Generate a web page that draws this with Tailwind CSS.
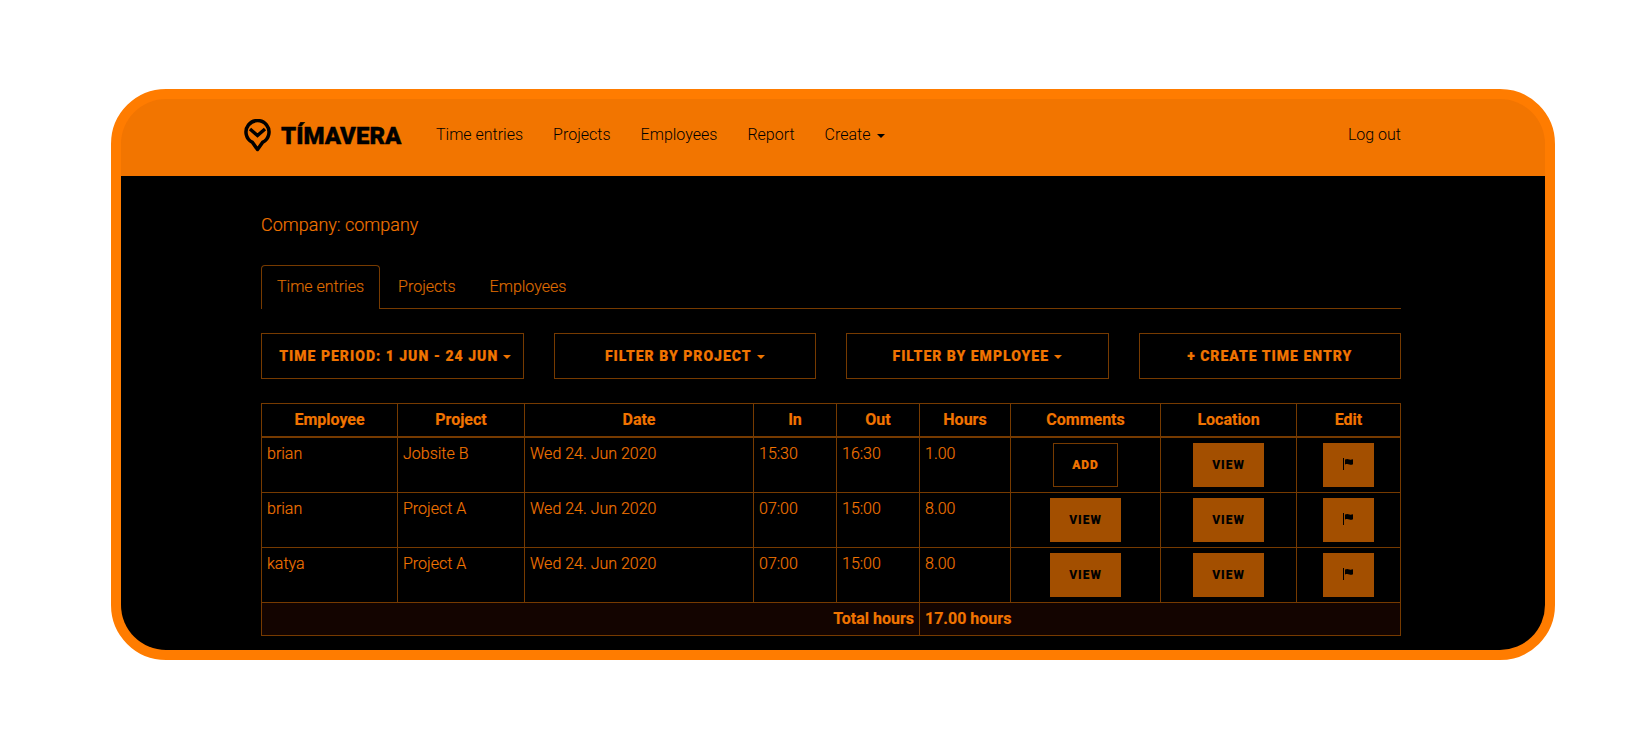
<!DOCTYPE html>
<html>

<head>
  <meta charset="utf-8" />
  <title>Tímavera</title>
  <script src="https://cdn.jsdelivr.net/npm/@tailwindcss/browser@4"></script>
</head>

<body class="bg-white font-['Roboto',sans-serif] font-light text-base leading-[1.42857]">
  <div class="ml-[111px] mt-[89px] w-[1444px] h-[571px] border-[10px] border-[#ff7c00] rounded-[55px] bg-[#ff7c00] overflow-hidden">
    <!-- navbar -->
    <header class="h-[77px] bg-[#f27500] text-black flex items-center pl-[123px] pr-[144px] pb-[4px]">
      <div class="flex items-center w-[192px] shrink-0">
        <svg class="w-[27px] h-[34px]" viewBox="0 0 27 34" fill="none" stroke="black">
          <path d="M13.500 30.500 L8.500 23.400 A11.500 11.500 0 1 1 18.500 23.400 Z" stroke-width="3.500" stroke-linejoin="round" />
          <path d="M6 10 L13.500 16.500 L21 10" stroke-width="3.500" />
        </svg>
        <span class="ml-[10px] font-black text-[24px] leading-none [-webkit-text-stroke:0.4px_black]">TÍMAVERA</span>
      </div>
      <nav class="flex gap-[30px] items-center">
        <a>Time entries</a>
        <a>Projects</a>
        <a>Employees</a>
        <a>Report</a>
        <a class="flex items-center gap-[6px]">Create <span class="w-0 h-0 border-x-4 border-t-4 border-x-transparent border-t-black"></span></a>
      </nav>
      <a class="ml-auto">Log out</a>
    </header>

    <div class="bg-black h-[474px] pl-[140px]">
      <main class="w-[1140px] text-[#f07400] [-webkit-text-stroke:0.15px_#f07400]">
        <h4 class="text-[18px] leading-[20px] pt-[39px]">Company: company</h4>

        <!-- tabs -->
        <div class="flex mt-[30px] h-[44px] border-b border-[#763a00]">
          <a class="h-[44px] px-[15px] pt-[10px] border border-b-0 border-[#763a00] rounded-t-[4px] bg-black text-[#d06800]">Time entries</a>
          <a class="px-[18px] pt-[11px] text-[#d06800]">Projects</a>
          <a class="pl-[16px] pt-[11px] text-[#d06800]">Employees</a>
        </div>

        <!-- filters -->
        <div class="grid grid-cols-4 gap-[30px] mt-[24px] font-black text-[14px] tracking-[1px]">
          <button class="h-[46px] pt-[2px] pl-[6px] border border-[#763a00] flex items-center justify-center gap-[5px]">TIME PERIOD: 1 JUN - 24 JUN <span class="w-0 h-0 border-x-4 border-t-4 border-x-transparent border-t-[#f07400]"></span></button>
          <button class="h-[46px] pt-[2px] border border-[#763a00] flex items-center justify-center gap-[5px]">FILTER BY PROJECT <span class="w-0 h-0 border-x-4 border-t-4 border-x-transparent border-t-[#f07400]"></span></button>
          <button class="h-[46px] pt-[2px] border border-[#763a00] flex items-center justify-center gap-[5px]">FILTER BY EMPLOYEE <span class="w-0 h-0 border-x-4 border-t-4 border-x-transparent border-t-[#f07400]"></span></button>
          <button class="h-[46px] pt-[2px] border border-[#763a00] flex items-center justify-center">+ CREATE TIME ENTRY</button>
        </div>

        <!-- time entries -->
        <table class="mt-[24px] w-[1139px] table-fixed border-collapse">
          <colgroup>
            <col class="w-[136px]" />
            <col class="w-[127px]" />
            <col class="w-[229px]" />
            <col class="w-[83px]" />
            <col class="w-[83px]" />
            <col class="w-[91px]" />
            <col class="w-[150px]" />
            <col class="w-[136px]" />
            <col class="w-[104px]" />
          </colgroup>
          <thead class="font-bold text-center leading-[22px]">
            <tr>
              <th class="border border-b-2 border-[#763a00] p-[5px]">Employee</th>
              <th class="border border-b-2 border-[#763a00] p-[5px]">Project</th>
              <th class="border border-b-2 border-[#763a00] p-[5px]">Date</th>
              <th class="border border-b-2 border-[#763a00] p-[5px]">In</th>
              <th class="border border-b-2 border-[#763a00] p-[5px]">Out</th>
              <th class="border border-b-2 border-[#763a00] p-[5px]">Hours</th>
              <th class="border border-b-2 border-[#763a00] p-[5px]">Comments</th>
              <th class="border border-b-2 border-[#763a00] p-[5px]">Location</th>
              <th class="border border-b-2 border-[#763a00] p-[5px]">Edit</th>
            </tr>
          </thead>
          <tbody>
            <tr>
              <td class="border border-[#763a00] p-[5px] align-top">brian</td>
              <td class="border border-[#763a00] p-[5px] align-top">Jobsite B</td>
              <td class="border border-[#763a00] p-[5px] align-top">Wed 24. Jun 2020</td>
              <td class="border border-[#763a00] p-[5px] align-top">15:30</td>
              <td class="border border-[#763a00] p-[5px] align-top">16:30</td>
              <td class="border border-[#763a00] p-[5px] align-top">1.00</td>
              <td class="border border-[#763a00] p-[5px]"><button class="block mx-auto w-[65px] h-[44px] pt-[1px] border border-[#763a00] font-black text-[12px] tracking-[1px]">ADD</button></td>
              <td class="border border-[#763a00] p-[5px]"><button class="block mx-auto w-[71px] h-[44px] pt-[1px] bg-[#a34f00] text-black [-webkit-text-stroke:0] font-black text-[12px] tracking-[1px]">VIEW</button></td>
              <td class="border border-[#763a00] p-[5px]"><button class="flex items-center justify-center mx-auto w-[51px] h-[44px] bg-[#a34f00]"><svg class="w-[11px] h-[12px] -mt-[3px]" viewBox="0 0 11 12" fill="black"><path d="M0 0h1v12H0z" /><path d="M2 1.500c2-1 3-.5 4.500 0 1 .3 2 .2 3.500-.3v5c-1.500.8-2.500.8-3.500.4-1.500-.6-2.500-1-4.500-.1z" /></svg></button></td>
            </tr>
            <tr>
              <td class="border border-[#763a00] p-[5px] align-top">brian</td>
              <td class="border border-[#763a00] p-[5px] align-top">Project A</td>
              <td class="border border-[#763a00] p-[5px] align-top">Wed 24. Jun 2020</td>
              <td class="border border-[#763a00] p-[5px] align-top">07:00</td>
              <td class="border border-[#763a00] p-[5px] align-top">15:00</td>
              <td class="border border-[#763a00] p-[5px] align-top">8.00</td>
              <td class="border border-[#763a00] p-[5px]"><button class="block mx-auto w-[71px] h-[44px] pt-[1px] bg-[#a34f00] text-black [-webkit-text-stroke:0] font-black text-[12px] tracking-[1px]">VIEW</button></td>
              <td class="border border-[#763a00] p-[5px]"><button class="block mx-auto w-[71px] h-[44px] pt-[1px] bg-[#a34f00] text-black [-webkit-text-stroke:0] font-black text-[12px] tracking-[1px]">VIEW</button></td>
              <td class="border border-[#763a00] p-[5px]"><button class="flex items-center justify-center mx-auto w-[51px] h-[44px] bg-[#a34f00]"><svg class="w-[11px] h-[12px] -mt-[3px]" viewBox="0 0 11 12" fill="black"><path d="M0 0h1v12H0z" /><path d="M2 1.500c2-1 3-.5 4.500 0 1 .3 2 .2 3.500-.3v5c-1.500.8-2.500.8-3.500.4-1.500-.6-2.500-1-4.500-.1z" /></svg></button></td>
            </tr>
            <tr>
              <td class="border border-[#763a00] p-[5px] align-top">katya</td>
              <td class="border border-[#763a00] p-[5px] align-top">Project A</td>
              <td class="border border-[#763a00] p-[5px] align-top">Wed 24. Jun 2020</td>
              <td class="border border-[#763a00] p-[5px] align-top">07:00</td>
              <td class="border border-[#763a00] p-[5px] align-top">15:00</td>
              <td class="border border-[#763a00] p-[5px] align-top">8.00</td>
              <td class="border border-[#763a00] p-[5px]"><button class="block mx-auto w-[71px] h-[44px] pt-[1px] bg-[#a34f00] text-black [-webkit-text-stroke:0] font-black text-[12px] tracking-[1px]">VIEW</button></td>
              <td class="border border-[#763a00] p-[5px]"><button class="block mx-auto w-[71px] h-[44px] pt-[1px] bg-[#a34f00] text-black [-webkit-text-stroke:0] font-black text-[12px] tracking-[1px]">VIEW</button></td>
              <td class="border border-[#763a00] p-[5px]"><button class="flex items-center justify-center mx-auto w-[51px] h-[44px] bg-[#a34f00]"><svg class="w-[11px] h-[12px] -mt-[3px]" viewBox="0 0 11 12" fill="black"><path d="M0 0h1v12H0z" /><path d="M2 1.500c2-1 3-.5 4.500 0 1 .3 2 .2 3.500-.3v5c-1.500.8-2.500.8-3.500.4-1.500-.6-2.500-1-4.500-.1z" /></svg></button></td>
            </tr>
            <tr class="bg-[#130400] font-bold leading-[22px]">
              <td colspan="5" class="border border-[#763a00] p-[5px] text-right">Total hours</td>
              <td colspan="4" class="border border-[#763a00] p-[5px]">17.00 hours</td>
            </tr>
          </tbody>
        </table>
      </main>
    </div>
  </div>
</body>

</html>
